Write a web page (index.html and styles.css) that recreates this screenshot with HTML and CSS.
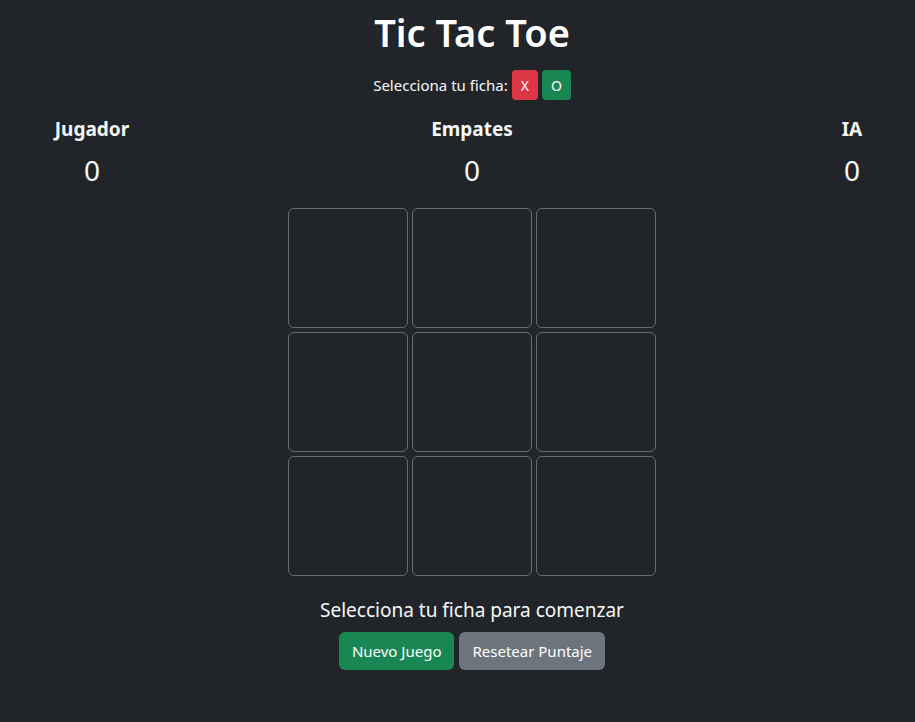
FILE: index.html
```html
<!DOCTYPE html>
<html lang="es">
<head>
<meta charset="utf-8">
<title>Tic Tac Toe</title>
<link rel="stylesheet" href="styles.css">
</head>
<body>
<main class="app">
  <h1 class="title">Tic Tac Toe</h1>
  <div class="picker">
    <span class="picker-label">Selecciona tu ficha:</span>
    <button class="btn-sm btn-red">X</button>
    <button class="btn-sm btn-green">O</button>
  </div>
  <div class="scores">
    <div class="score-col"><div class="score-name">Jugador</div><div class="score-val">0</div></div>
    <div class="score-col"><div class="score-name">Empates</div><div class="score-val">0</div></div>
    <div class="score-col"><div class="score-name">IA</div><div class="score-val">0</div></div>
  </div>
  <div class="board">
    <div class="cell"></div><div class="cell"></div><div class="cell"></div>
    <div class="cell"></div><div class="cell"></div><div class="cell"></div>
    <div class="cell"></div><div class="cell"></div><div class="cell"></div>
  </div>
  <p class="status">Selecciona tu ficha para comenzar</p>
  <div class="actions">
    <button class="btn btn-green">Nuevo Juego</button>
    <button class="btn btn-gray">Resetear Puntaje</button>
  </div>
</main>
</body>
</html>
```
FILE: styles.css
```css
html, body {
  margin: 0;
  padding: 0;
  background: #212529;
}
body {
  font-family: "Noto Sans", "Open Sans", sans-serif;
  color: #f8f9fa;
}
.app {
  box-sizing: border-box;
  width: 100%;
  padding: 8px 0 0 29px;
  display: flex;
  flex-direction: column;
  align-items: center;
}
.title {
  margin: 0;
  font-size: 38px;
  line-height: 48px;
  font-weight: 600;
  color: #fff;
}
.picker {
  margin-top: 14px;
  display: flex;
  align-items: center;
  gap: 4px;
  font-size: 15px;
}
button {
  font-family: inherit;
  border: none;
  color: #fff;
  cursor: pointer;
}
.btn-sm {
  height: 30px;
  padding: 0 9px;
  font-size: 14px;
  border-radius: 4px;
}
.btn-red { background: #dc3545; }
.btn-green { background: #198754; }
.btn-gray { background: #6c757d; }
.scores {
  margin-top: 17px;
  align-self: stretch;
  display: flex;
  justify-content: space-between;
}
.score-col {
  flex: 0 0 126px;
  text-align: center;
}
.score-name {
  font-size: 19px;
  line-height: 24px;
  font-weight: 700;
}
.score-val {
  margin-top: 12px;
  font-size: 28px;
  line-height: 34px;
}
.board {
  margin-top: 21px;
  display: grid;
  grid-template-columns: repeat(3, 120px);
  grid-template-rows: repeat(3, 120px);
  gap: 4px;
}
.cell {
  box-sizing: border-box;
  border: 1px solid #6a6e72;
  border-radius: 6px;
  background: #212529;
}
.status {
  margin: 19px 0 0;
  font-size: 19px;
  line-height: 30px;
}
.actions {
  margin-top: 7px;
  display: flex;
  gap: 5px;
}
.btn {
  height: 38px;
  padding: 0 13px;
  font-size: 15px;
  border-radius: 6px;
}
```
